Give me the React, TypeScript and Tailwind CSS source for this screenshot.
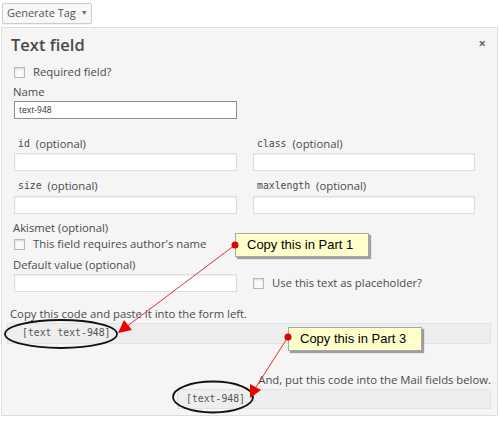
import React from "react";

const Check = () => (
    <span className="inline-block w-[11px] h-[11px] border border-[#b4b9be] bg-[#fbfbfb] shadow-[inset_0_1px_2px_rgba(0,0,0,0.15)] shrink-0" />
);

const Field = ({ className = "" }: { className?: string }) => (
    <div className={`h-[18px] bg-white border border-[#dddddd] shadow-[inset_0_1px_2px_rgba(0,0,0,0.07)] ${className}`} />
);

const Label = ({ code, h = "h-[18px]" }: { code: string; h?: string }) => (
    <div className={`${h} flex items-center pl-[4px] text-[11.3px] text-[#4a4a4a]`}>
        <span className="font-['DejaVu_Sans_Mono',monospace] text-[9.8px] mr-[6px]">{code}</span>
        <span>(optional)</span>
    </div>
);

const Callout = ({ text, className }: { text: string; className: string }) => (
    <div className={`absolute h-[24px] w-[134px] bg-[#ffffcc] border border-[#a8a8a8] shadow-[2px_2px_1px_rgba(0,0,0,0.35)] flex items-center pl-[11px] text-[13px] text-black font-['Liberation_Sans',Arial,sans-serif] ${className}`}>
        {text}
    </div>
);

export default function App() {
    return (
        <div className="relative w-[500px] h-[423px] bg-white overflow-hidden font-['Open_Sans','Noto_Sans',sans-serif] text-[#4a4a4a]">
            <div className="pt-[3px] pl-[2px]">
                <div className="flex w-[90px] items-center h-[21px] pl-[4px] bg-[#f7f7f7] border border-[#cccccc] rounded-[2px] text-[11px] text-[#555] shadow-[0_1px_0_rgba(0,0,0,0.05)]">
                    Generate Tag
                    <span className="ml-[5px] text-[7px] text-[#666]">▼</span>
                </div>
            </div>

            <div className="mt-[3px] ml-[1px] w-[497px] h-[389px] bg-[#f5f5f5] border border-[#dddddd]">
                <div className="pl-[11px] pr-[12px]">
                    {/* title */}
                    <div className="h-[34px] flex items-center justify-between">
                        <span className="ml-[-2px] text-[16.5px] font-semibold text-[#4a4a4a] leading-none">Text field</span>
                        <span className="text-[13px] font-bold text-[#666] mr-[-1px] mt-[-2px]">×</span>
                    </div>

                    <div className="h-[20px] flex items-center gap-[8px] pl-[1px] text-[11.3px]">
                        <Check />
                        <span>Required field?</span>
                    </div>

                    <div className="h-[18px] mt-[1px] flex items-center text-[11.3px]">Name</div>
                    <div className="w-[223px] h-[18px] ml-[1px] bg-white border border-[#8e8e8e] flex items-center pl-[4px] text-[8.5px] text-[#333]">
                        text-948
                    </div>

                    <div className="grid grid-cols-[223px_222px] gap-x-[16px] ml-[1px] mt-[16px]">
                        <Label code="id" />
                        <Label code="class" />
                        <Field />
                        <Field />
                        <div className="mt-[6px]"><Label code="size" h="h-[19px]" /></div>
                        <div className="mt-[6px]"><Label code="maxlength" h="h-[19px]" /></div>
                        <Field />
                        <Field />
                    </div>

                    <div className="h-[18px] mt-[5px] flex items-center text-[11.3px]">Akismet (optional)</div>
                    <div className="h-[15px] flex items-center gap-[8px] pl-[1px] text-[11.3px]">
                        <Check />
                        <span>This field requires author's name</span>
                    </div>
                    <div className="h-[18px] mt-[4px] flex items-center text-[11.3px]">Default value (optional)</div>
                    <div className="flex items-center ml-[1px]">
                        <Field className="w-[223px]" />
                        <div className="ml-[16px] flex items-center gap-[8px] text-[11.3px]">
                            <Check />
                            <span>Use this text as placeholder?</span>
                        </div>
                    </div>
                </div>

                <div className="pl-[8px] pr-[6px] mt-[14px]">
                    <div className="h-[17px] flex items-center text-[11.3px]">Copy this code and paste it into the form left.</div>
                    <div className="h-[21px] ml-[-3px] bg-[#eeeeee] border border-[#e2e2e2] flex items-center pl-[14px] font-['DejaVu_Sans_Mono',monospace] text-[9.8px] text-[#555]">
                        [text text-948]
                    </div>
                    <div className="h-[18px] mt-[27px] flex items-center justify-end text-[11.3px]">
                        And, put this code into the Mail fields below.
                    </div>
                    <div className="h-[20px] ml-[167px] bg-[#eeeeee] border border-[#e2e2e2] flex items-center pl-[8px] font-['DejaVu_Sans_Mono',monospace] text-[9.8px] text-[#555]">
                        [text-948]
                    </div>
                </div>
            </div>

            {/* annotations */}
            <svg className="absolute inset-0 pointer-events-none" width="500" height="423" viewBox="0 0 500 423">
                <ellipse cx="61" cy="334" rx="56" ry="14" fill="none" stroke="#111" strokeWidth="1.8" />
                <ellipse cx="213" cy="397" rx="40" ry="15.5" fill="none" stroke="#111" strokeWidth="1.8" />
                <line x1="235" y1="245" x2="126" y2="327" stroke="#e53030" strokeWidth="1" />
                <polygon points="118,333 124,320 132,330" fill="#ee0000" />
                <line x1="288" y1="337" x2="256" y2="387" stroke="#e53030" strokeWidth="1" />
                <polygon points="250,398 250,384 261,390" fill="#ee0000" />
            </svg>
            <Callout text="Copy this in Part 1" className="left-[235px] top-[233px]" />
            <Callout text="Copy this in Part 3" className="left-[288px] top-[327px]" />
            <svg className="absolute inset-0 pointer-events-none" width="500" height="423" viewBox="0 0 500 423">
                <circle cx="235" cy="245" r="3.5" fill="#e00000" />
                <circle cx="288" cy="337" r="3.5" fill="#e00000" />
            </svg>
        </div>
    );
}
